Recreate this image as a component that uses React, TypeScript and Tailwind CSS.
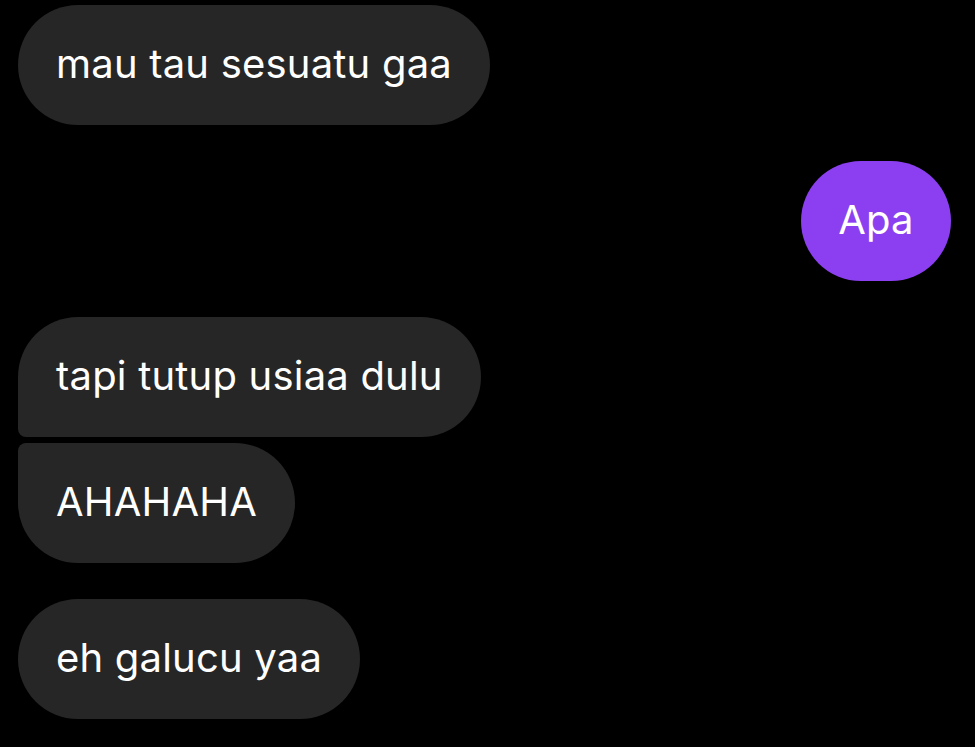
import React from "react";

export default function App() {
  const font = { fontFamily: "Inter, 'Noto Sans', sans-serif" };
  return (
    <div className="w-[975px] h-[747px] bg-black overflow-hidden pt-[5px] pl-[18px] pr-[24px] flex flex-col tracking-[0.2px]" style={font}>
      <div className="self-start h-[120px] px-[38px] pb-[2px] flex items-center rounded-[60px] bg-[#262626] text-white text-[40px] leading-none">
        mau tau sesuatu gaa
      </div>
      <div className="self-end mt-[36px] h-[120px] w-[150px] pb-[2px] flex items-center justify-center rounded-[60px] bg-[#8b3ff0] text-white text-[40px] leading-none">
        Apa
      </div>
      <div className="self-start mt-[36px] h-[120px] px-[38px] pb-[2px] flex items-center rounded-tl-[60px] rounded-tr-[60px] rounded-br-[60px] rounded-bl-[8px] bg-[#262626] text-white text-[40px] leading-none">
        tapi tutup usiaa dulu
      </div>
      <div className="self-start mt-[6px] h-[120px] px-[38px] pb-[2px] flex items-center rounded-tl-[8px] rounded-tr-[60px] rounded-br-[60px] rounded-bl-[60px] bg-[#262626] text-white text-[40px] leading-none">
        AHAHAHA
      </div>
      <div className="self-start mt-[36px] h-[120px] px-[38px] pb-[2px] flex items-center rounded-[60px] bg-[#262626] text-white text-[40px] leading-none">
        eh galucu yaa
      </div>
    </div>
  );
}
